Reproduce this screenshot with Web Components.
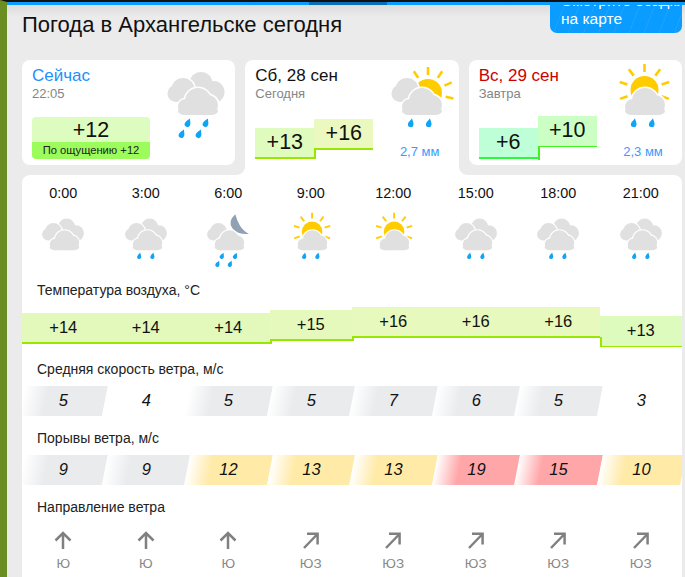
<!DOCTYPE html>
<html lang="ru">
<head>
<meta charset="utf-8">
<title>Погода в Архангельске сегодня</title>
<style>
  html, body{ margin: 0; height: 577px; overflow: hidden; background: #ebebeb; }
  body{ font-family: "Liberation Sans", Arial, sans-serif; color: #111; }
</style>
</head>
<body>
<wx-app></wx-app>

<script>
// svg pieces for the weather icons, all in a 60x70 box
const RAYS = (cx, cy, list) => list.map(a => {
  const r = a * Math.PI / 180;
  const x1 = cx + Math.cos(r) * 18, y1 = cy + Math.sin(r) * 18;
  const x2 = cx + Math.cos(r) * 26, y2 = cy + Math.sin(r) * 26;
  return `<line x1="${x1}" y1="${y1}" x2="${x2}" y2="${y2}" stroke="#ffcc00" stroke-width="2.6"/>`;
}).join('');

const SUN = (cx, cy, list) => `<circle cx="${cx}" cy="${cy}" r="14" fill="#ffcc00"/>` + RAYS(cx, cy, list);

const outlined = shapes => `<g fill="#fff" stroke="#fff" stroke-width="3.2">${shapes}</g><g fill="#e0e0e0">${shapes}</g>`;

const CLOUD_REAR = `<circle cx="35" cy="13.5" r="11.5"/><circle cx="47.5" cy="22" r="11"/><rect x="30" y="14" width="20" height="17"/>`;
const CLOUD_LEFT = `<circle cx="17" cy="19.5" r="11.5"/><circle cx="10" cy="23.5" r="8.5"/><rect x="10" y="20" width="22" height="12" rx="3"/>`;
const CLOUD_FRONT = `<circle cx="32" cy="31" r="13"/><circle cx="20" cy="37" r="8"/><circle cx="42" cy="35" r="10"/><rect x="12" y="37" width="40" height="8" rx="7"/>`;

const MOON = `<path d="M40 -4Q29 6 36 15Q43 24 58.5 23Q50 18 46 11Q42 4 40 -4z" fill="#8fa1b3"/>`;

const drop = (x, y, a) => `<path transform="translate(${x} ${y}) rotate(${a}) scale(.88)" d="M0 -5.5C1 -3 3.2 -1 3.2 1.5A3.2 3.2 0 1 1 -3.2 1.5C-3.2 -1 -1 -3 0 -5.5z" fill="#10a4f4"/>`;

const RAIN = {
  0: '',
  1: drop(21, 53, 12) + drop(39, 53, 12),
  2: drop(22, 53, 24) + drop(40, 53, 24) + drop(16, 64, 24) + drop(33, 64, 24)
};

const ICONS = {
  clouds: outlined(CLOUD_REAR) + outlined(CLOUD_LEFT) + outlined(CLOUD_FRONT),
  moon: MOON + outlined(CLOUD_LEFT) + outlined(CLOUD_FRONT),
  partly: SUN(38, 23, [-123, -90, -57, -24, 12]) + outlined(CLOUD_LEFT) + outlined(CLOUD_FRONT),
  sun: SUN(31.5, 20, [-90, -53, -127, -18, -162, 20, 160]) + outlined(CLOUD_FRONT)
};

class WxIcon extends HTMLElement{
  static get is(){ return 'wx-icon'; }

  connectedCallback(){
    const name = this.getAttribute('name');
    const rain = this.getAttribute('rain') || 0;
    this.attachShadow({ mode: 'open' });
    this.shadowRoot.innerHTML = `
      <style>
        :host{ display: block; width: var(--icon-w, 60px); height: var(--icon-h, 70px); }
        svg{ display: block; width: 100%; height: 100%; overflow: visible; }
      </style>
      <svg viewBox="0 0 60 70">${ICONS[name]}${RAIN[rain]}</svg>`;
  }
}

class WxTemp extends HTMLElement{
  static get is(){ return 'wx-temp'; }

  connectedCallback(){
    const step = +this.getAttribute('step') || 0;
    const line = this.getAttribute('line') || '#99e600';
    this.attachShadow({ mode: 'open' });
    this.shadowRoot.innerHTML = `
      <style>
        :host{
          display: block;
          position: relative;
          box-sizing: border-box;
          height: var(--temp-h, 31px);
          line-height: calc(var(--temp-h, 31px) - 2px);
          font-size: var(--temp-fs, 16.5px);
          text-align: center;
          background: ${this.getAttribute('bg') || '#e2f9bb'};
          border-bottom: var(--line-w, 2px) solid ${line};
        }
        i{
          position: absolute;
          left: 0;
          width: 2px;
          background: ${line};
        }
      </style>
      ${this.getAttribute('value')}
      ${step > 0 ? `<i style="top:100%;height:${step + 2}px"></i>` : ''}
      ${step < 0 ? `<i style="bottom:0;height:${-step}px"></i>` : ''}`;
  }
}

class WxCard extends HTMLElement{
  static get is(){ return 'wx-card'; }

  connectedCallback(){
    const icon = this.getAttribute('icon');
    const rain = this.getAttribute('rain');
    const mm = this.getAttribute('mm');
    const color = this.getAttribute('color') || '#111';
    const heading = this.getAttribute('heading');
    this.attachShadow({ mode: 'open' });
    this.shadowRoot.innerHTML = `
      <style>
        :host{
          display: flex;
          position: relative;
          box-sizing: border-box;
          height: 105px;
          padding: 6px 9px 6px 10px;
          background: #fff;
          border-radius: 8px;
        }
        :host([selected]){
          height: 115px;
          margin-bottom: -10px;
          padding-bottom: 16px;
          border-radius: 8px 8px 0 0;
        }
        :host([selected])::before, :host([selected])::after{
          content: '';
          position: absolute;
          bottom: 0;
          width: 8px;
          height: 8px;
        }
        :host([selected])::before{
          right: 100%;
          background: radial-gradient(circle at 0 0, #ebebeb 7.5px, #fff 8px);
        }
        :host([selected])::after{
          left: 100%;
          background: radial-gradient(circle at 100% 0, #ebebeb 7.5px, #fff 8px);
        }
        #left{
          flex: 1;
          display: flex;
          flex-direction: column;
          justify-content: space-between;
          min-width: 0;
        }
        #title{ font-size: 17px; line-height: 20px; color: ${color}; }
        #sub{ font-size: 13px; line-height: 16px; color: #858585; }
        #right{ width: 60px; padding-top: 4px; }
        #mm{ font-size: 13px; line-height: 16px; margin-top: 4px; color: #3a9bff; text-align: center; white-space: nowrap; }
      </style>
      <div id="left">
        <div>
          <div id="title">${heading}</div>
          <div id="sub">${this.getAttribute('sub')}</div>
        </div>
        <slot></slot>
      </div>
      <div id="right">
        <wx-icon name="${icon}" rain="${rain}"></wx-icon>
        ${mm ? `<div id="mm">${mm}</div>` : ''}
      </div>`;
  }
}

class WxFeels extends HTMLElement{
  static get is(){ return 'wx-feels'; }

  connectedCallback(){
    this.attachShadow({ mode: 'open' });
    this.shadowRoot.innerHTML = `
      <style>
        :host{
          display: block;
          width: 118px;
          border-radius: 4px;
          overflow: hidden;
          text-align: center;
        }
        #t{ height: 25px; line-height: 26px; font-size: 21.5px; background: #dcfcc0; }
        #f{ height: 17px; line-height: 17px; font-size: 11.2px; background: #9cfc5c; color: #222; }
      </style>
      <div id="t">${this.getAttribute('value')}</div>
      <div id="f">${this.getAttribute('feels')}</div>`;
  }
}

class WxSteps extends HTMLElement{
  static get is(){ return 'wx-steps'; }

  connectedCallback(){
    this.attachShadow({ mode: 'open' });
    this.shadowRoot.innerHTML = `
      <style>
        :host{
          display: grid;
          grid-template-columns: 59px 59px;
          height: 43px;
          --temp-fs: 21.5px;
        }
      </style>
      <slot></slot>`;
  }
}

class WxRow extends HTMLElement{
  static get is(){ return 'wx-row'; }

  connectedCallback(){
    this.attachShadow({ mode: 'open' });
    this.shadowRoot.innerHTML = `
      <style>
        :host{
          display: grid;
          grid-template-columns: repeat(8, 1fr);
          align-items: start;
          text-align: center;
        }
      </style>
      <slot></slot>`;
  }
}

class WxLabel extends HTMLElement{
  static get is(){ return 'wx-label'; }

  connectedCallback(){
    this.attachShadow({ mode: 'open' });
    this.shadowRoot.innerHTML = `
      <style>
        :host{
          display: block;
          padding-left: 15px;
          font-size: 14px;
          line-height: 18px;
          color: #222;
        }
      </style>
      <slot></slot>`;
  }
}

class WxHour extends HTMLElement{
  static get is(){ return 'wx-hour'; }

  connectedCallback(){
    this.attachShadow({ mode: 'open' });
    this.shadowRoot.innerHTML = `
      <style>
        :host{ display: block; font-size: 14.4px; line-height: 17px; --icon-w: 44px; --icon-h: 51.6px; }
        wx-icon{ margin: 15px auto 0; }
      </style>
      ${this.getAttribute('time')}
      <wx-icon name="${this.getAttribute('icon')}" rain="${this.getAttribute('rain')}"></wx-icon>`;
  }
}

const WIND_COLORS = { grey: '#e9ebed', yellow: '#ffeaa8', red: '#ffa6a8', none: '#fff' };

class WxWind extends HTMLElement{
  static get is(){ return 'wx-wind'; }

  connectedCallback(){
    const color = WIND_COLORS[this.getAttribute('tone')];
    this.attachShadow({ mode: 'open' });
    this.shadowRoot.innerHTML = `
      <style>
        :host{
          display: block;
          height: 30px;
          line-height: 28px;
          font-size: 16.5px;
          font-style: italic;
          background: linear-gradient(90deg, #fff 0, ${color} 29%);
          transform: skewX(-11deg);
        }
        span{ display: block; transform: skewX(11deg); }
      </style>
      <span>${this.getAttribute('value')}</span>`;
  }
}

class WxDir extends HTMLElement{
  static get is(){ return 'wx-dir'; }

  connectedCallback(){
    const arrow = this.getAttribute('name') == 'ЮЗ'
      ? 'M3 18L16 4.5M6 3.8H16.6V14.5'
      : 'M10 19V3.5M2.5 10.5L10 3L17.5 10.5';
    this.attachShadow({ mode: 'open' });
    this.shadowRoot.innerHTML = `
      <style>
        :host{ display: block; font-size: 13.5px; line-height: 16px; color: #888; }
        svg{ display: block; margin: 0 auto 6px; width: 20px; height: 20px; }
      </style>
      <svg viewBox="0 0 20 20"><path d="${arrow}" fill="none" stroke="#808080" stroke-width="2.5"/></svg>
      ${this.getAttribute('name')}`;
  }
}

class WxApp extends HTMLElement{
  static get is(){ return 'wx-app'; }

  static get template(){
    const hours = [
      ['0:00', 'clouds', 0], ['3:00', 'clouds', 1], ['6:00', 'moon', 2], ['9:00', 'sun', 1],
      ['12:00', 'sun', 0], ['15:00', 'clouds', 1], ['18:00', 'clouds', 1], ['21:00', 'clouds', 1]
    ];
    const temps = [14, 14, 14, 15, 16, 16, 16, 13];
    const tempBg = { 13: '#ddfbbc', 14: '#e2f9bb', 15: '#e5f9bc', 16: '#e8f9bd' };
    const wind = [[5, 'grey'], [4, 'none'], [5, 'grey'], [5, 'grey'], [7, 'grey'], [6, 'grey'], [5, 'grey'], [3, 'none']];
    const gust = [[9, 'grey'], [9, 'grey'], [12, 'yellow'], [13, 'yellow'], [13, 'yellow'], [19, 'red'], [15, 'red'], [10, 'yellow']];
    const dirs = ['Ю', 'Ю', 'Ю', 'ЮЗ', 'ЮЗ', 'ЮЗ', 'ЮЗ', 'ЮЗ'];

    const tempCells = temps.map((t, i) => {
      const step = i ? (t - temps[i - 1]) * 3 : 0;
      return `<wx-temp value="+${t}" bg="${tempBg[t]}" step="${step}" style="margin-top:${(16 - t) * 3}px${t == 13 ? ';--line-w:1px' : ''}"></wx-temp>`;
    }).join('');

    return `
      <style>
        :host{
          display: block;
          box-sizing: border-box;
          height: 577px;
          padding: 5px 3px 0 15px;
          border-left: 7px solid #6b8e23;
          border-top: 2px solid #111;
          position: relative;
          overflow: hidden;
          background: linear-gradient(#dcdcdc 3px, #ebebeb 15px);
        }
        #bar{
          position: absolute;
          left: 0; right: 0; top: 0;
          height: 3px;
          z-index: 2;
          background: linear-gradient(90deg, #0b9cff 302px, #0b6eb8 302px 380px, #0b9cff 380px);
        }
        header{
          display: flex;
          justify-content: space-between;
          align-items: flex-start;
          height: 55px;
          margin-top: -2px;
        }
        h1{
          margin: 6px 0 0;
          font-size: 22px;
          line-height: 28px;
          font-weight: normal;
          color: #111;
        }
        #map{
          box-sizing: border-box;
          width: 132px;
          height: 28px;
          padding: 0 11px;
          border-radius: 0 0 7px 7px;
          overflow: hidden;
          color: #fff;
          font-size: 15.5px;
          line-height: 18px;
          white-space: nowrap;
          background: repeating-linear-gradient(112deg, rgba(255,255,255,0) 0 13px, rgba(255,255,255,.07) 13px 14px), #0b9cff;
        }
        #map div{ margin-top: -13px; }
        #days{
          display: grid;
          grid-template-columns: repeat(3, 1fr);
          gap: 10px;
          align-items: start;
          height: 105px;
          margin-bottom: 10px;
        }
        main{
          padding-top: 10px;
          background: #fff;
          border-radius: 8px 8px 0 0;
          height: 420px;
          overflow: hidden;
        }
        .mt1{ margin-top: 12px; }
        .strip{ margin-top: 8px; height: 40px; }
        .mt2{ margin-top: 13px; }
        .mt3{ margin-top: 13px; }
        .dirs{ margin-top: 14px; }
      </style>

      <div id="bar"></div>

      <header>
        <h1>Погода в Архангельске сегодня</h1>
        <div id="map"><div>Смотрите осадки<br>на карте</div></div>
      </header>

      <div id="days">
        <wx-card heading="Сейчас" sub="22:05" color="#2090ff" icon="clouds" rain="2">
          <wx-feels value="+12" feels="По ощущению +12"></wx-feels>
        </wx-card>
        <wx-card heading="Сб, 28 сен" sub="Сегодня" icon="partly" rain="1" mm="2,7 мм" selected>
          <wx-steps>
            <wx-temp value="+13" bg="#dffbbd" style="margin-top:12px"></wx-temp>
            <wx-temp value="+16" bg="#ebf9c0" step="9" style="margin-top:3px"></wx-temp>
          </wx-steps>
        </wx-card>
        <wx-card heading="Вс, 29 сен" sub="Завтра" color="#cc0000" icon="sun" rain="1" mm="2,3 мм">
          <wx-steps>
            <wx-temp value="+6" bg="#bfffd7" line="#2ef83c" style="margin-top:12px"></wx-temp>
            <wx-temp value="+10" bg="#ccffc4" line="#44f020" step="12" style="--line-w:1px"></wx-temp>
          </wx-steps>
        </wx-card>
      </div>

      <main>
        <wx-row>
          ${hours.map(h => `<wx-hour time="${h[0]}" icon="${h[1]}" rain="${h[2]}"></wx-hour>`).join('')}
        </wx-row>

        <wx-label class="mt1">Температура воздуха, °C</wx-label>
        <wx-row class="strip">${tempCells}</wx-row>

        <wx-label class="mt2">Средняя скорость ветра, м/с</wx-label>
        <wx-row style="margin-top:8px">
          ${wind.map(w => `<wx-wind value="${w[0]}" tone="${w[1]}"></wx-wind>`).join('')}
        </wx-row>

        <wx-label class="mt3">Порывы ветра, м/с</wx-label>
        <wx-row style="margin-top:8px">
          ${gust.map(w => `<wx-wind value="${w[0]}" tone="${w[1]}"></wx-wind>`).join('')}
        </wx-row>

        <wx-label class="mt3">Направление ветра</wx-label>
        <wx-row class="dirs">
          ${dirs.map(d => `<wx-dir name="${d}"></wx-dir>`).join('')}
        </wx-row>
      </main>
    `;
  }

  constructor(){
    super();
    this.attachShadow({ mode: 'open' });
    this.shadowRoot.innerHTML = WxApp.template;
  }
}

[WxIcon, WxTemp, WxCard, WxFeels, WxSteps, WxRow, WxLabel, WxHour, WxWind, WxDir, WxApp]
  .forEach(el => window.customElements.define(el.is, el));
</script>
</body>
</html>
